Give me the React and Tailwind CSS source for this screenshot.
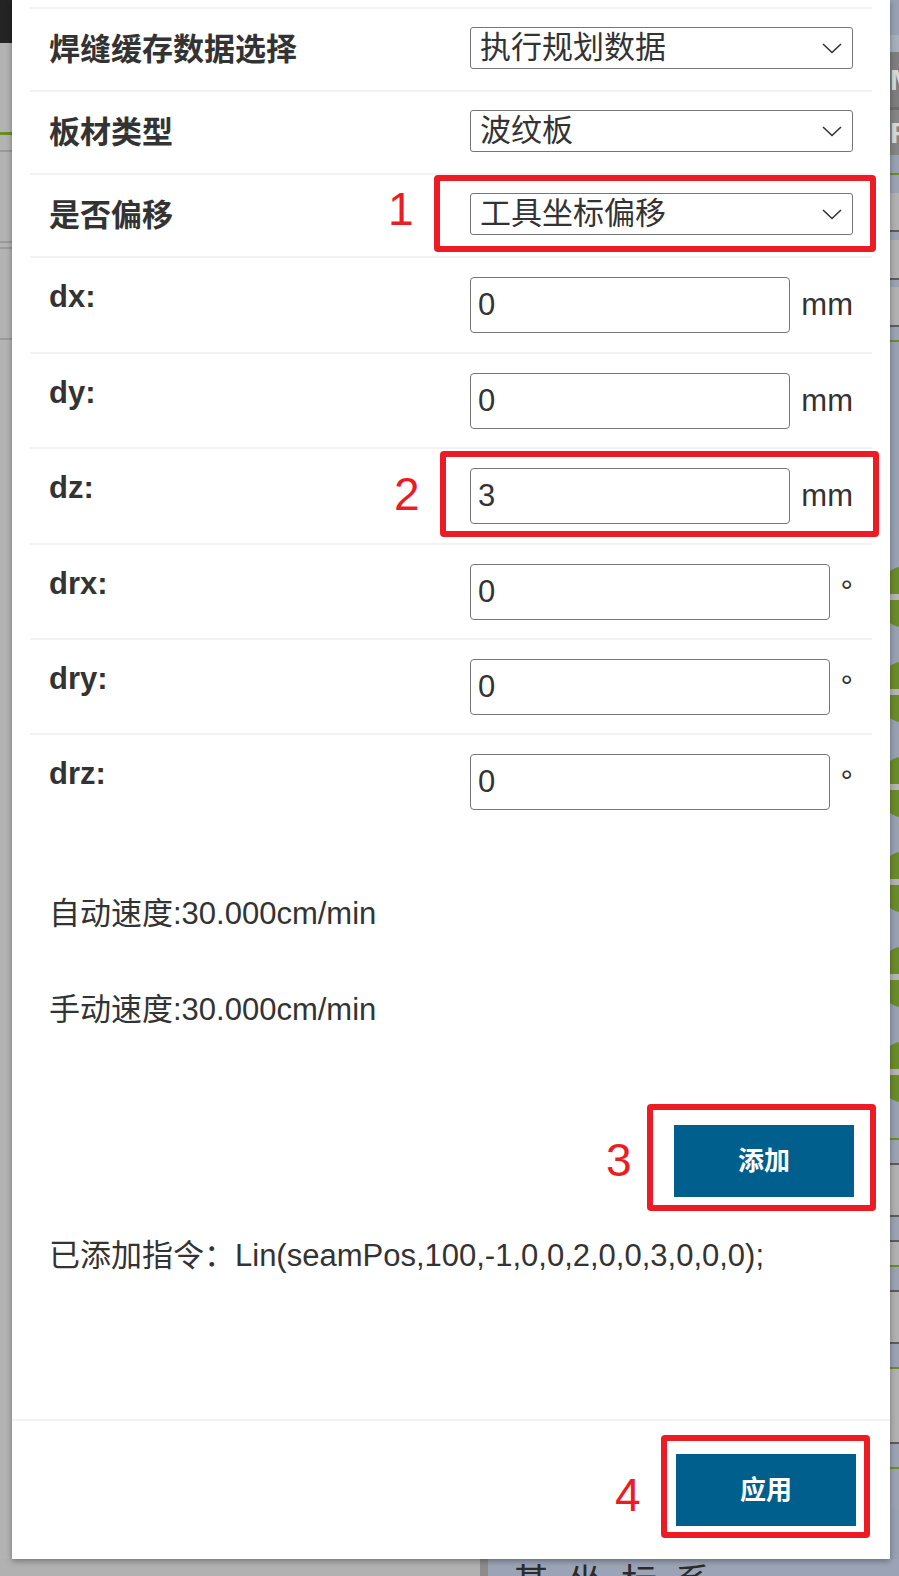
import React from "react";

const Chevron = () => (
  <svg width="20" height="11" viewBox="0 0 20 11" fill="none">
    <polyline points="1,1 10,9.5 19,1" stroke="#333" strokeWidth="1.6" fill="none" />
  </svg>
);

function SelectRow({ label, value }) {
  return (
    <div className="h-[83px] border-t-2 border-[#f2f2f2] px-[19px] flex items-center justify-between">
      <span className="text-[31px] leading-[36px] font-bold text-[#333]">{label}</span>
      <div className="w-[383px] h-[42px] mb-[3px] border border-[#767676] rounded-[3px] flex items-center justify-between pl-[9px] pr-[10px]">
        <span className="text-[31px] leading-[36px] text-[#333]">{value}</span>
        <Chevron />
      </div>
    </div>
  );
}

function InputRow({ label, value, unit, h }) {
  return (
    <div className={"border-t-2 border-[#f2f2f2] px-[19px] flex items-center justify-between " + h}>
      <span className="self-start mt-[21px] text-[31px] leading-[36px] font-bold text-[#333]">{label}</span>
      <div className="w-[383px] flex items-center gap-[11px]">
        <input
          readOnly
          value={value}
          className="flex-1 min-w-0 h-[56px] border border-[#767676] rounded-[4px] px-[7px] text-[31px] text-[#333] outline-none bg-white"
        />
        <span className="text-[31px] leading-[36px] text-[#333]">{unit}</span>
      </div>
    </div>
  );
}

const Band = ({ c }) => <div className={c} />;

function LeftStrip() {
  return (
    <div className="w-[12px] shrink-0 flex flex-col bg-[#b3b3b3]">
      <Band c="h-[43px] bg-[#242424]" />
      <Band c="h-[89px]" />
      <Band c="h-[3px] bg-[#6b8e23]" />
      <Band c="h-[15px]" />
      <Band c="h-[2px] bg-[#9a9a9a]" />
      <Band c="h-[89px]" />
      <Band c="h-[2px] bg-[#9a9a9a]" />
      <Band c="h-[4px]" />
      <Band c="h-[2px] bg-[#9a9a9a]" />
      <Band c="h-[89px]" />
      <Band c="h-[2px] bg-[#9a9a9a]" />
    </div>
  );
}

function Circle() {
  return (
    <div className="h-[95px] relative">
      <div className="absolute left-[-14px] top-[8px] w-[62px] h-[62px] rounded-full bg-[#6a8b2a]" />
      <div className="absolute left-0 right-0 top-[36px] h-[6px] bg-[#b4b4b4]" />
    </div>
  );
}

function RightStrip() {
  return (
    <div className="w-[9px] shrink-0 flex flex-col bg-[#98a1b2] overflow-hidden">
      <Band c="h-[35px] bg-[#97a1b3]" />
      <Band c="h-[17px] bg-[#a7afbc]" />
      <div className="h-[55px] bg-[#7e7e7e] text-[#d8d8d8] text-[30px] font-bold leading-[55px] overflow-hidden">M</div>
      <Band c="h-[3px] bg-[#6e6e6e]" />
      <div className="h-[45px] bg-[#858585] text-[#d8d8d8] text-[30px] font-bold leading-[45px] overflow-hidden">F</div>
      <Band c="h-[18px] bg-[#98a1b2]" />
      <Band c="h-[2px] bg-[#6b8e23]" />
      <Band c="h-[18px] bg-[#9ba3b3]" />
      <Band c="h-[37px] bg-[#b1b1b1]" />
      <Band c="h-[2px] bg-[#5c5c5c]" />
      <Band c="h-[8px] bg-[#9ba3b3]" />
      <Band c="h-[38px] bg-[#b1b1b1]" />
      <Band c="h-[2px] bg-[#5c5c5c]" />
      <Band c="h-[7px] bg-[#9ba3b3]" />
      <Band c="h-[38px] bg-[#b1b1b1]" />
      <Band c="h-[2px] bg-[#5c5c5c]" />
      <Band c="h-[13px] bg-[#9ba3b3]" />
      <Band c="h-[2px] bg-[#6b8e23]" />
      <Band c="h-[216px] bg-[#98a1b2]" />
      <Circle />
      <Circle />
      <Circle />
      <Circle />
      <Circle />
      <Circle />
      <Band c="h-[10px] bg-[#98a1b2]" />
      <Band c="h-[2px] bg-[#6b8e23]" />
      <Band c="h-[23px] bg-[#9ba3b3]" />
      <Band c="h-[2px] bg-[#5c5c5c]" />
      <Band c="h-[50px] bg-[#b1b1b1]" />
      <Band c="h-[2px] bg-[#5c5c5c]" />
      <Band c="h-[23px] bg-[#9ba3b3]" />
      <Band c="h-[2px] bg-[#5c5c5c]" />
      <Band c="h-[23px] bg-[#b1b1b1]" />
      <Band c="h-[2px] bg-[#6b8e23]" />
      <Band c="h-[23px] bg-[#9ba3b3]" />
      <Band c="h-[2px] bg-[#5c5c5c]" />
      <Band c="h-[50px] bg-[#b1b1b1]" />
      <Band c="h-[2px] bg-[#5c5c5c]" />
      <Band c="h-[23px] bg-[#9ba3b3]" />
      <Band c="h-[2px] bg-[#6b8e23]" />
      <Band c="h-[73px] bg-[#b1b1b1]" />
      <Band c="h-[2px] bg-[#5c5c5c]" />
      <Band c="h-[23px] bg-[#9ba3b3]" />
      <Band c="h-[2px] bg-[#6b8e23]" />
      <Band c="h-[40px] bg-[#9ba3b3]" />
    </div>
  );
}

function RedBox({ c }) {
  return <div className={"absolute border-[6px] border-[#ed1c24] rounded-[4px] pointer-events-none " + c} />;
}

function Num({ c, n }) {
  return (
    <div className={"absolute text-[46px] leading-none text-[#ed1c24] [font-family:'Liberation_Sans',sans-serif] " + c}>
      {n}
    </div>
  );
}

function Panel() {
  return (
    <div className="w-[878px] shrink-0 h-[1559px] bg-white relative z-10 shadow-[0_2px_6px_rgba(0,0,0,0.35)] flex flex-col">
      <div className="pt-[7px] px-[18px]">
        <SelectRow label="焊缝缓存数据选择" value="执行规划数据" />
        <SelectRow label="板材类型" value="波纹板" />
        <SelectRow label="是否偏移" value="工具坐标偏移" />
        <InputRow label="dx:" value="0" unit="mm" h="h-[96px]" />
        <InputRow label="dy:" value="0" unit="mm" h="h-[95px]" />
        <InputRow label="dz:" value="3" unit="mm" h="h-[96px]" />
        <InputRow label="drx:" value="0" unit="°" h="h-[95px]" />
        <InputRow label="dry:" value="0" unit="°" h="h-[95px]" />
        <div className="h-[95px] border-t-2 border-[#f2f2f2] px-[19px] flex items-center justify-between">
          <span className="self-start mt-[21px] text-[31px] leading-[36px] font-bold text-[#333]">drz:</span>
          <div className="w-[383px] flex items-center gap-[11px]">
            <input
              readOnly
              value="0"
              className="flex-1 min-w-0 h-[56px] border border-[#767676] rounded-[4px] px-[7px] text-[31px] text-[#333] outline-none bg-white"
            />
            <span className="text-[31px] leading-[36px] text-[#333]">°</span>
          </div>
        </div>
      </div>

      <div className="pl-[37px] mt-[68px] text-[31px] leading-[36px] text-[#333]">自动速度:30.000cm/min</div>
      <div className="pl-[37px] mt-[60px] text-[31px] leading-[36px] text-[#333]">手动速度:30.000cm/min</div>

      <div className="flex justify-end pr-[36px] mt-[97px]">
        <div className="w-[180px] h-[72px] bg-[#005f8c] text-white text-[26px] font-bold flex items-center justify-center">
          添加
        </div>
      </div>

      <div className="pl-[37px] mt-[41px] text-[31px] leading-[36px] text-[#333] whitespace-nowrap">
        已添加指令：Lin(seamPos,100,-1,0,0,2,0,0,3,0,0,0);
      </div>

      <div className="mt-auto h-[140px] border-t-2 border-[#f2f2f2] flex items-center justify-end pr-[34px]">
        <div className="w-[180px] h-[72px] bg-[#005f8c] text-white text-[26px] font-bold flex items-center justify-center">
          应用
        </div>
      </div>

      <RedBox c="left-[422px] top-[175px] w-[442px] h-[77px]" />
      <RedBox c="left-[428px] top-[451px] w-[439px] h-[86px]" />
      <RedBox c="left-[635px] top-[1104px] w-[229px] h-[107px]" />
      <RedBox c="left-[649px] top-[1435px] w-[209px] h-[103px]" />
      <Num c="left-[376px] top-[186px]" n="1" />
      <Num c="left-[382px] top-[471px]" n="2" />
      <Num c="left-[594px] top-[1137px]" n="3" />
      <Num c="left-[603px] top-[1472px]" n="4" />
    </div>
  );
}

export default function App() {
  return (
    <div className="w-[899px] h-[1576px] overflow-hidden bg-[#b3b3b3] flex flex-col [font-family:'Liberation_Sans','Noto_Sans_CJK_SC',sans-serif]">
      <div className="flex h-[1559px] shrink-0">
        <LeftStrip />
        <Panel />
        <RightStrip />
      </div>
      <div className="flex h-[17px] shrink-0">
        <div className="w-[480px] bg-[#b1b1b1]" />
        <div className="w-[8px] bg-[#8c8c8c]" />
        <div className="flex-1 bg-[#9ba4b6] overflow-hidden flex gap-[18px] pl-[25px] pt-[6px] text-[36px] leading-none text-[#2b2b2b]">
          <span>基</span>
          <span>坐</span>
          <span>标</span>
          <span>系</span>
        </div>
      </div>
    </div>
  );
}
